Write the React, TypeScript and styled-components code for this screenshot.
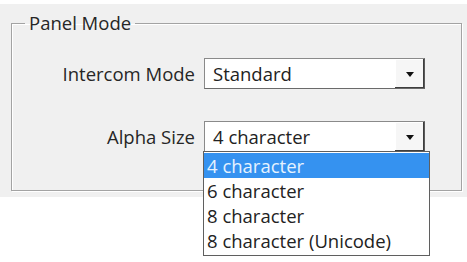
import React from "react";
import styled, { createGlobalStyle } from "styled-components";

const Global = createGlobalStyle`
  html, body { margin: 0; padding: 0; background: #ffffff; }
  body { font-family: "Open Sans", "Noto Sans", sans-serif; }
`;

const Page = styled.div`
  width: 467px;
  height: 262px;
  background: #ffffff;
  overflow: hidden;
  padding-top: 4px;
  box-sizing: border-box;
`;

const Panel = styled.div`
  background: #f0f0f0;
  height: 193px;
  padding: 8px 0 0 11px;
  box-sizing: border-box;
`;

const Group = styled.fieldset`
  margin: 0;
  width: 451px;
  height: 179px;
  box-sizing: border-box;
  border: 1px solid #a3a3a3;
  box-shadow: inset 1px 1px 0 #ffffff, 1px 1px 0 #ffffff;
  padding: 0;
  font-size: 18.5px;
  color: #222222;
`;

const Legend = styled.legend`
  margin-left: 13px;
  padding: 0 4px;
  line-height: 22px;
  color: #262626;
`;

const Form = styled.div`
  display: grid;
  grid-template-columns: 183px 221px;
  column-gap: 9px;
  row-gap: 32px;
  padding-top: 24px;
`;

const Label = styled.div`
  text-align: right;
  align-self: center;
  line-height: 22px;
  color: #262626;
`;

const Combo = styled.div`
  position: relative;
  height: 31px;
  box-sizing: border-box;
  border: 1px solid #8a8a8a;
  border-right-color: #5a5a5a;
  border-bottom-color: #6a6a6a;
  background: #ffffff;
  display: flex;
  align-items: center;
`;

const Value = styled.span`
  flex: 1;
  padding-left: 8px;
  line-height: 22px;
  color: #222222;
  white-space: nowrap;
`;

const Button = styled.div`
  width: 29px;
  height: 100%;
  box-sizing: border-box;
  background: #f6f6f6;
  box-shadow: inset -1px -1px 0 #3e3e3e, inset 1px 1px 0 #ffffff;
  display: flex;
  align-items: center;
  justify-content: center;
`;

const Arrow = styled.span`
  width: 0;
  height: 0;
  border-left: 4px solid transparent;
  border-right: 4px solid transparent;
  border-top: 5px solid #111111;
  margin-top: 2px;
`;

const List = styled.ul`
  position: absolute;
  top: 100%;
  left: -2px;
  width: 227px;
  margin: 0;
  padding: 1px 0 2px;
  list-style: none;
  box-sizing: border-box;
  background: #ffffff;
  border: 1px solid #5f5f5f;
  z-index: 2;
`;

const Item = styled.li<{ $selected?: boolean }>`
  height: 25px;
  line-height: 25px;
  padding-left: 3px;
  white-space: nowrap;
  background: ${(p) => (p.$selected ? "#3592f0" : "transparent")};
  color: ${(p) => (p.$selected ? "#e6f2ff" : "#222222")};
`;

const options = ["4 character", "6 character", "8 character", "8 character (Unicode)"];

export default function App() {
  return (
    <Page>
      <Global />
      <Panel>
        <Group>
          <Legend>Panel Mode</Legend>
          <Form>
            <Label>Intercom Mode</Label>
            <Combo>
              <Value>Standard</Value>
              <Button>
                <Arrow />
              </Button>
            </Combo>
            <Label>Alpha Size</Label>
            <Combo>
              <Value>4 character</Value>
              <Button>
                <Arrow />
              </Button>
              <List>
                {options.map((o, i) => (
                  <Item key={o} $selected={i === 0}>
                    {o}
                  </Item>
                ))}
              </List>
            </Combo>
          </Form>
        </Group>
      </Panel>
    </Page>
  );
}
